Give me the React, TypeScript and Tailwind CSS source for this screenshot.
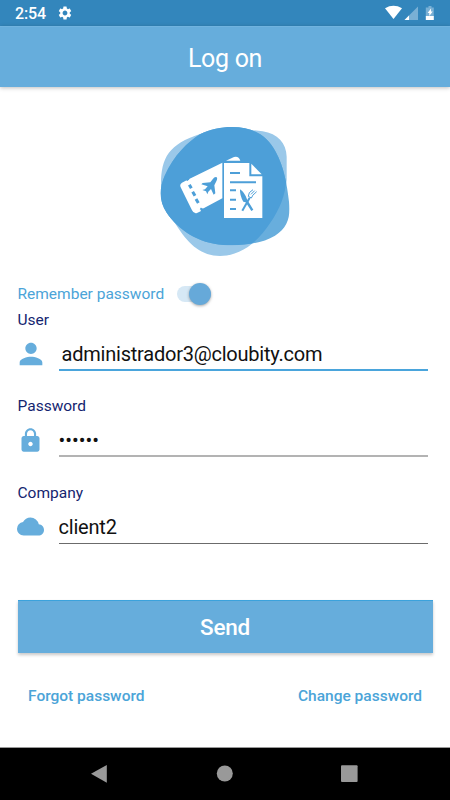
import React from 'react';
import { MdPerson, MdLock, MdCloud, MdSettings } from 'react-icons/md';

const StatusBar = () => (
  <div className="flex h-[26px] items-center justify-between bg-[#3386bc] pl-[15px] pr-[15px] text-white">
    <div className="flex items-center gap-[11px]">
      <span className="pt-[2px] text-[16px] font-medium leading-[24px] tracking-[-0.1px]">2:54</span>
      <MdSettings className="size-4" />
    </div>
    <svg className="h-[26px] w-[50px]" viewBox="0 0 50 26">
      <path d="M0 8.2Q8.5 3.4 17 8.2L8.5 19Z" fill="#fff" />
      <path d="M33 6.5V20H19.5Z" fill="#79b0d5" />
      <path d="M24 15.5V20H19.5Z" fill="#fff" />
      <path d="M43.5 6h3v1.5h2.3v9h-8v-9h2.7Z" fill="#79b0d5" />
      <path d="M40.8 16h8v4h-8Z" fill="#fff" />
      <path d="M46 8.5l-3.4 4.4h1.7V16l3.4-4.4H46Z" fill="#fff" />
    </svg>
  </div>
);

const Logo = () => (
  <svg className="size-[150px]" viewBox="0 0 450 450">
    <defs>
      <clipPath id="blob">
        <path d="M245 36C310 36 352 62 377 110C402 155 411 208 417 260C422 305 414 337 375 362C330 388 273 393 220 390C145 384 85 345 50 293C27 260 27 220 44 182C72 120 115 80 150 58C180 42 215 36 245 36Z" />
      </clipPath>
    </defs>
    <path d="M33 210C33 125 58 88 150 57C205 43 282 41 338 49C383 56 409 85 410 125L410 195C406 240 390 282 360 325C320 385 270 423 210 423C155 423 118 390 85 340C50 288 33 250 33 210Z" fill="#9ac8e9" />
    <g clipPath="url(#blob)">
      <path d="M0 0H450V450H0Z" fill="#68aedd" />
      <path d="M20 210C20 108 78 56 150 37C180 30 210 30 245 30C300 30 345 45 375 90C395 120 406 155 409 195C406 240 390 282 360 325C320 385 270 423 210 423C148 423 106 385 78 332C40 300 20 250 20 210Z" fill="#4d9fd8" />
    </g>
    <path d="M217 143L119 191Q117 197 110 196L96 203Q88 208 92 217L126 286Q131 297 141 294L152 289Q152 281 161 280L217 250Z" fill="#fff" />
    <path d="M228 137L252 126Q266 122 271 137Z" fill="#fff" />
    <path d="M118 209l6 11M128 230l7 12M138 252l7 12" stroke="#4d9fd8" strokeWidth="9" />
    <path d="M107 190l7 6M151 280l7 5" stroke="#4d9fd8" strokeWidth="6" />
    <path d="M199 186Q193 185 188 193L181 202L158 204L154 208L173 214L165 223L157 225L168 229L172 238L175 230L183 222L191 239L196 235L193 211L199 199Q204 189 199 186Z" fill="#4d9fd8" />
    <path d="M222 144H298V184H337V309H222Z" fill="#fff" />
    <path d="M304 146L335 178H304Z" fill="#fff" />
    <path d="M240 174h30M240 202h78M240 226h18M240 254h18M240 282h18" stroke="#4d9fd8" strokeWidth="6" />
    <path d="M270 223Q284 232 292 255L310 284L304 288L287 262L280 260Q269 242 270 223Z" fill="#4d9fd8" />
    <path d="M277 287L299 248" stroke="#4d9fd8" strokeWidth="6" />
    <path d="M298 233L309 224M303 238L314 227M307 242L320 230M298 233L295 244L304 249L308 242" fill="none" stroke="#4d9fd8" strokeWidth="3" />
  </svg>
);

const Field = ({ label, icon, value, line, className = '' }) => (
  <div className="flex h-[86.5px] flex-col">
    <label className="pl-[0.5px] text-[15.5px] leading-[20px] text-[#14256f]">{label}</label>
    <div className="mt-[4px] flex">
      <div className="flex h-[37px] w-[41.5px] items-center pt-[3px] text-[#66addc]">{icon}</div>
      <input
        className={`h-[37px] w-[369.5px] bg-transparent pt-[5px] text-[20px] text-[#111] outline-none ${line} ${className}`}
        defaultValue={value}
      />
    </div>
  </div>
);

export default function App() {
  return (
    <div className="flex h-[800px] w-[450px] flex-col bg-white font-[Roboto,sans-serif]">
      <StatusBar />
      <header className="flex h-[61px] items-center justify-center border-t border-[#70b3df] bg-[#66addc] pt-[4px] shadow-[0_1px_4px_rgba(0,0,0,0.25)]">
        <h1 className="text-[25px] leading-[30px] tracking-[-0.3px] text-white">Log on</h1>
      </header>

      <main className="flex flex-1 flex-col px-[17px] pt-[28px]">
        <div className="flex h-[150px] justify-center">
          <Logo />
        </div>

        {/* Remember switch */}
        <div className="mt-[17px] flex h-[24px] items-center">
          <span className="w-[160px] pl-[0.5px] text-[15.5px] leading-[20px] text-[#4ba4d8]">
            Remember password
          </span>
          <div className="-mt-px flex h-4 w-[34px] items-center justify-end rounded-full bg-[#d6e8f5]">
            <div className="size-[22px] shrink-0 rounded-full bg-[#66a9d9] shadow-[0_1px_3px_rgba(0,0,0,0.35)]" />
          </div>
        </div>

        <div className="mt-[3.5px] flex flex-col">
          <Field
            label="User"
            icon={<MdPerson className="-ml-[3.5px] size-[34px]" />}
            value="administrador3@cloubity.com"
            line="border-b-2 border-[#4aa5dc]"
            className="pl-[3px] tracking-[-0.22px]"
          />
          <Field
            label="Password"
            icon={<MdLock className="size-[27px]" />}
            value="••••••"
            line="border-b-2 border-[#b3b3b3]"
          />
          <Field
            label="Company"
            icon={<MdCloud className="size-[27px]" />}
            value="client2"
            line="border-b border-[#6b6b6b]"
            className="tracking-[-0.2px]"
          />
        </div>

        <button className="mx-[0.5px] mt-[30.5px] h-[53px] shrink-0 border-t border-[#3ba2dc] bg-[#66addc] pt-[2px] text-[22.5px] font-medium tracking-[-0.2px] text-white shadow-[0_2px_3px_rgba(0,0,0,0.22)]">
          Send
        </button>

        <div className="mt-[32px] flex justify-between pl-[11px] pr-[11px] text-[15.5px] font-medium leading-[22px] text-[#4ba4d8]">
          <span>Forgot password</span>
          <span>Change password</span>
        </div>
      </main>

      {/* Android navigation */}
      <nav className="h-[53px] border-t border-[#999] bg-black">
        <svg className="h-[52px] w-[450px]" viewBox="0 748 450 52">
          <path d="M91 773.7L106.8 765V782.7Z" fill="#999" />
          <circle cx="224.8" cy="773.5" r="8" fill="#999" />
          <rect x="341" y="765.3" width="16.6" height="16.6" rx="1" fill="#999" />
        </svg>
      </nav>
    </div>
  );
}
